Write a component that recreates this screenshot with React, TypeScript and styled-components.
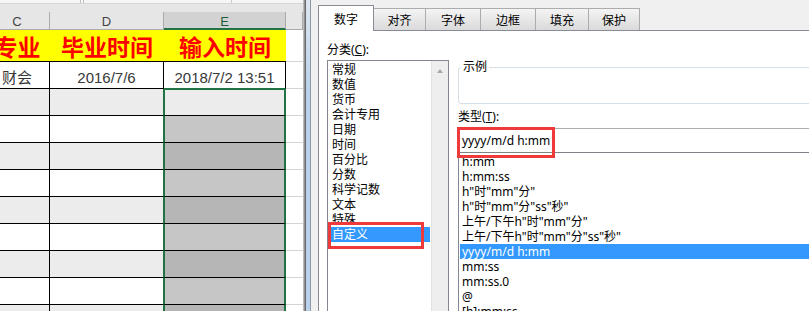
import React from "react";
import styled, { createGlobalStyle, css } from "styled-components";

const COLORS = {
  grid: "#000000",
  select: "#217346",
  band: "#ececec",
  selLight: "#c6c6c6",
  selDark: "#b6b6b6",
  header: "#e6e6e6",
  headerActive: "#d2d2d2",
  headerLine: "#ababab",
  dialog: "#f0f0f0",
  tabLine: "#898c95",
  listLine: "#828790",
  mark: "#ee3a3a",
  highlight: "#3399ff",
};

const UI_FONT = `"Noto Sans", "Noto Sans CJK SC", sans-serif`;
const SHEET_FONT = `"Liberation Sans", "Noto Sans CJK SC", sans-serif`;

const GlobalStyle = createGlobalStyle`
  html, body {
    margin: 0;
    padding: 0;
    background: #ffffff;
  }
`;

type Col = "c" | "d" | "e" | "f";
const COL_W: Record<Col, number | null> = { c: 65, d: 114, e: 122, f: null };

const colWidth = (col: Col) => {
  const w = COL_W[col];
  return w ? css`width: ${w}px; flex: none;` : css`flex: 1;`;
};

const StyledScreen = styled.div`
  display: flex;
  width: 809px;
  height: 311px;
  overflow: hidden;
`;

/* ---------- spreadsheet ---------- */

const StyledSheet = styled.div`
  width: 303px;
  flex: none;
  overflow: hidden;
  background: ${COLORS.header};
`;

const StyledSheetInner = styled.div`
  margin-left: -15px;
  width: 318px;
  display: flex;
  flex-direction: column;
`;

const StyledFormulaEdge = styled.div`
  height: 3px;
  margin-bottom: 8px;
  border-bottom: 1px solid #d6d6d6;
  background: linear-gradient(
    to right,
    #f5f5f5 95px,
    #bdbdbd 95px,
    #bdbdbd 96px,
    #fbfbfb 96px,
    #fbfbfb 98px,
    #bdbdbd 98px,
    #bdbdbd 99px,
    #f5f5f5 99px,
    #f5f5f5 246px,
    #c8c8c8 246px,
    #c8c8c8 247px,
    #f5f5f5 247px
  );
`;

const StyledHeaderRow = styled.div`
  display: flex;
  height: 18px;
`;

const StyledColHead = styled.div<{ $col: Col; $active?: boolean }>`
  box-sizing: border-box;
  ${(p) => colWidth(p.$col)};
  display: flex;
  align-items: center;
  justify-content: center;
  font: 13px/1 ${SHEET_FONT};
  color: ${(p) => (p.$active ? "#1f5e3a" : "#444444")};
  background: ${(p) => (p.$active ? COLORS.headerActive : COLORS.header)};
  border-right: 1px solid ${COLORS.headerLine};
  border-bottom: ${(p) =>
    p.$active ? `2px solid ${COLORS.select}` : `1px solid ${COLORS.headerLine}`};
  padding-top: 2px;
`;

const StyledRow = styled.div<{ $h: number }>`
  display: flex;
  height: ${(p) => p.$h}px;
  flex: none;
`;

const StyledCell = styled.div<{
  $col: Col;
  $bg: string;
  $open?: boolean;
  $sel?: boolean;
  $selTop?: boolean;
  $selEdge?: boolean;
}>`
  box-sizing: border-box;
  ${(p) => colWidth(p.$col)};
  display: flex;
  align-items: center;
  justify-content: center;
  background: ${(p) => p.$bg};
  border-bottom: 1px solid
    ${(p) => (p.$col === "f" ? "#d4d4d4" : p.$selEdge ? COLORS.select : COLORS.grid)};
  border-right: ${(p) =>
    p.$open || p.$col === "f" ? "none" : `1px solid ${COLORS.grid}`};
  ${(p) =>
    p.$sel &&
    css`
      width: 123px;
      margin-left: -1px;
      border-left: 2px solid ${COLORS.select};
      border-right: 2px solid ${COLORS.select};
    `};
  ${(p) =>
    p.$selTop &&
    css`
      box-shadow: inset 0 1px 0 ${COLORS.select};
    `};
`;

const StyledTitle = styled.span`
  font: 700 23px/1 "Noto Sans CJK SC", sans-serif;
  color: #ff0000;
  white-space: nowrap;
  margin-top: 2px;
`;

const StyledValue = styled.span`
  font: 15px/1 ${SHEET_FONT};
  color: #383838;
  white-space: nowrap;
  margin-top: 4px;
`;

const StyledShadow = styled.div`
  width: 3px;
  flex: none;
  background: linear-gradient(to right, #d0d0d0, #555555);
`;

/* ---------- format cells dialog ---------- */

const StyledDialog = styled.div`
  width: 620px;
  flex: none;
  display: flex;
  border-left: 4px solid;
  border-image: linear-gradient(to bottom, #dfe7f0, #b9d1ea 90px) 1;
`;

const StyledDialogBody = styled.div`
  flex: 1;
  display: flex;
  flex-direction: column;
  background: ${COLORS.dialog};
  border-left: 1px solid #8d99a8;
  padding: 5px 0 0 7px;
  font: 12px/15px ${UI_FONT};
  color: #000;
`;

const StyledTabs = styled.div`
  display: flex;
  align-items: flex-end;
  height: 26px;
  margin-bottom: -1px;
  position: relative;
  z-index: 1;
`;

const StyledTab = styled.div<{ $active?: boolean; $w: number }>`
  box-sizing: border-box;
  width: ${(p) => p.$w}px;
  display: flex;
  align-items: center;
  justify-content: center;
  padding-top: 1px;
  ${(p) =>
    p.$active
      ? css`
          height: 26px;
          background: #ffffff;
          border: 1px solid ${COLORS.tabLine};
          border-bottom: none;
        `
      : css`
          height: 22px;
          margin-bottom: 1px;
          background: linear-gradient(to bottom, #f4f4f4, #dadada);
          border: 1px solid #acacac;
          border-left: none;
          border-bottom: none;
        `};
`;

const StyledPanel = styled.div`
  flex: 1;
  min-height: 0;
  background: #ffffff;
  border-top: 1px solid ${COLORS.tabLine};
  border-left: 1px solid ${COLORS.tabLine};
  display: grid;
  grid-template-columns: 122px 1fr;
  column-gap: 9px;
  padding: 11px 0 0 8px;
`;

const StyledColumn = styled.div`
  display: flex;
  flex-direction: column;
  min-height: 0;
`;

const StyledLabel = styled.div<{ $gap: number }>`
  height: 16px;
  line-height: 16px;
  margin-bottom: ${(p) => p.$gap}px;
  white-space: nowrap;
`;

const StyledListBox = styled.div`
  position: relative;
  flex: 1;
  display: flex;
  border: 1px solid ${COLORS.listLine};
  border-bottom: none;
  background: #ffffff;
`;

const StyledItems = styled.div`
  flex: 1;
  padding-top: 1px;
`;

const StyledItem = styled.div<{ $selected?: boolean; $inset: number }>`
  height: 15px;
  line-height: 15px;
  margin: 0 1px 0 ${(p) => p.$inset}px;
  padding-left: 2px;
  white-space: nowrap;
  ${(p) =>
    p.$selected &&
    css`
      background: ${COLORS.highlight};
      color: #ffffff;
    `};
`;

const StyledScrollTrack = styled.div`
  width: 17px;
  flex: none;
  background: #eeeeee;
  border-left: 1px solid #e2e2e2;
  box-sizing: border-box;
`;

const StyledScrollButton = styled.div`
  height: 17px;
  display: flex;
  align-items: center;
  justify-content: center;
  padding-top: 3px;
  box-sizing: border-box;
`;

const StyledArrowUp = styled.span`
  width: 0;
  height: 0;
  border-left: 3.5px solid transparent;
  border-right: 3.5px solid transparent;
  border-bottom: 4px solid #a8a8a8;
`;

const StyledGroup = styled.fieldset`
  box-sizing: border-box;
  margin: 18px 0 0;
  padding: 0;
  height: 44px;
  border: 1px solid #d5dfe5;
  border-radius: 3px;
`;

const StyledLegend = styled.legend`
  margin-left: 2px;
  padding: 0 2px;
  line-height: 14px;
`;

const StyledTypeLabel = styled.div`
  height: 16px;
  line-height: 16px;
  margin: 5px 0 3px;
`;

const StyledInput = styled.div`
  position: relative;
  box-sizing: border-box;
  height: 25px;
  line-height: 23px;
  padding-left: 3px;
  border-top: 1px solid #abadb3;
  border-left: 1px solid #b5b7bd;
  border-bottom: 1px solid #7f8389;
  white-space: nowrap;
`;

const StyledTypeList = styled.div`
  flex: 1;
  min-height: 0;
  overflow: hidden;
  border-left: 1px solid ${COLORS.listLine};
  padding-top: 1px;
`;

const StyledMark = styled.div<{ $left: number; $top: number; $w: number; $h: number }>`
  position: absolute;
  left: ${(p) => p.$left}px;
  top: ${(p) => p.$top}px;
  width: ${(p) => p.$w}px;
  height: ${(p) => p.$h}px;
  box-sizing: border-box;
  border: 3px solid ${COLORS.mark};
  z-index: 2;
  pointer-events: none;
`;

const TABS = [
  { label: "数字", w: 56 },
  { label: "对齐", w: 52 },
  { label: "字体", w: 55 },
  { label: "边框", w: 55 },
  { label: "填充", w: 53 },
  { label: "保护", w: 51 },
];

const CATEGORIES = [
  "常规",
  "数值",
  "货币",
  "会计专用",
  "日期",
  "时间",
  "百分比",
  "分数",
  "科学记数",
  "文本",
  "特殊",
  "自定义",
];

const TYPES = [
  "h:mm",
  "h:mm:ss",
  'h"时"mm"分"',
  'h"时"mm"分"ss"秒"',
  '上午/下午h"时"mm"分"',
  '上午/下午h"时"mm"分"ss"秒"',
  "yyyy/m/d h:mm",
  "mm:ss",
  "mm:ss.0",
  "@",
  "[h]:mm:ss",
];

const BAND_ROWS = 9;

const Sheet: React.FC = () => (
  <StyledSheet>
    <StyledSheetInner>
      <StyledFormulaEdge />
      <StyledHeaderRow>
        <StyledColHead $col="c">C</StyledColHead>
        <StyledColHead $col="d">D</StyledColHead>
        <StyledColHead $col="e" $active>
          E
        </StyledColHead>
        <StyledColHead $col="f" />
      </StyledHeaderRow>

      <StyledRow $h={32}>
        <StyledCell $col="c" $bg="#ffff00" $open>
          <StyledTitle>专业</StyledTitle>
        </StyledCell>
        <StyledCell $col="d" $bg="#ffff00" $open>
          <StyledTitle>毕业时间</StyledTitle>
        </StyledCell>
        <StyledCell $col="e" $bg="#ffff00" $open>
          <StyledTitle>输入时间</StyledTitle>
        </StyledCell>
        <StyledCell $col="f" $bg="#ffffff" />
      </StyledRow>

      <StyledRow $h={27}>
        <StyledCell $col="c" $bg="#ffffff">
          <StyledValue>财会</StyledValue>
        </StyledCell>
        <StyledCell $col="d" $bg="#ffffff">
          <StyledValue>2016/7/6</StyledValue>
        </StyledCell>
        <StyledCell $col="e" $bg="#ffffff" $selEdge>
          <StyledValue>2018/7/2 13:51</StyledValue>
        </StyledCell>
        <StyledCell $col="f" $bg="#ffffff" />
      </StyledRow>

      {Array.from({ length: BAND_ROWS }).map((_, index) => {
        const bandBg = index % 2 === 0 ? COLORS.band : "#ffffff";
        const selBg =
          index === 0 ? COLORS.band : index % 2 === 1 ? COLORS.selLight : COLORS.selDark;
        return (
          <StyledRow $h={27} key={index}>
            <StyledCell $col="c" $bg={bandBg} />
            <StyledCell $col="d" $bg={bandBg} />
            <StyledCell $col="e" $bg={selBg} $sel $selTop={index === 0} />
            <StyledCell $col="f" $bg="#ffffff" />
          </StyledRow>
        );
      })}
    </StyledSheetInner>
  </StyledSheet>
);

const FormatDialog: React.FC = () => (
  <StyledDialog>
    <StyledDialogBody>
      <StyledTabs>
        {TABS.map((tab, index) => (
          <StyledTab key={tab.label} $w={tab.w} $active={index === 0}>
            {tab.label}
          </StyledTab>
        ))}
      </StyledTabs>

      <StyledPanel>
        <StyledColumn>
          <StyledLabel $gap={2}>
            分类(<u>C</u>):
          </StyledLabel>
          <StyledListBox>
            <StyledItems>
              {CATEGORIES.map((name, index) => (
                <StyledItem
                  key={name}
                  $inset={2}
                  $selected={index === CATEGORIES.length - 1}
                >
                  {name}
                </StyledItem>
              ))}
            </StyledItems>
            <StyledScrollTrack>
              <StyledScrollButton>
                <StyledArrowUp />
              </StyledScrollButton>
            </StyledScrollTrack>
            <StyledMark $left={0} $top={161} $w={96} $h={27} />
          </StyledListBox>
        </StyledColumn>

        <StyledColumn>
          <StyledGroup>
            <StyledLegend>示例</StyledLegend>
          </StyledGroup>
          <StyledTypeLabel>
            类型(<u>T</u>):
          </StyledTypeLabel>
          <StyledInput>
            yyyy/m/d h:mm
            <StyledMark $left={-2} $top={-2} $w={98} $h={31} />
          </StyledInput>
          <StyledTypeList>
            {TYPES.map((type) => (
              <StyledItem key={type} $inset={1} $selected={type === "yyyy/m/d h:mm"}>
                {type}
              </StyledItem>
            ))}
          </StyledTypeList>
        </StyledColumn>
      </StyledPanel>
    </StyledDialogBody>
  </StyledDialog>
);

const App: React.FC = () => (
  <>
    <GlobalStyle />
    <StyledScreen>
      <Sheet />
      <StyledShadow />
      <FormatDialog />
    </StyledScreen>
  </>
);

export default App;
